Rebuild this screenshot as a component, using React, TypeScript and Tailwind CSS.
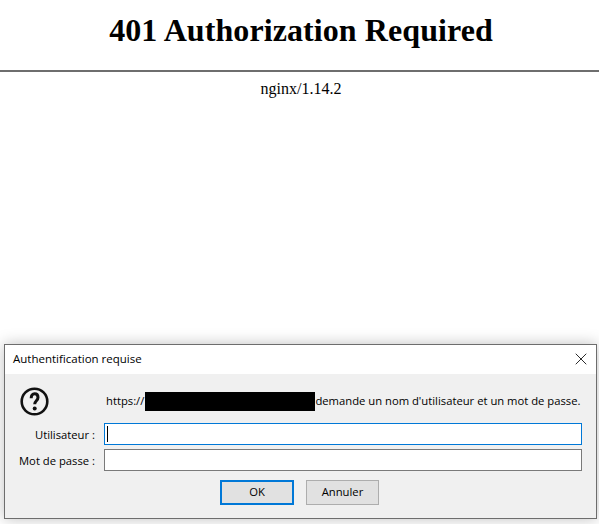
import { X } from 'lucide-react';

const Field = ({ label, focused }: { label: string; focused?: boolean }) => (
  <div className="flex h-[22px] items-center">
    <label className="w-[87px] pt-[2px] text-right">{label}</label>
    <div
      className={`ml-[9px] flex h-[22px] flex-1 items-center border bg-white pl-[2px] ${
        focused ? 'border-[#0078d7]' : 'border-[#7a7a7a]'
      }`}
    >
      {focused && <div className="h-[16px] w-px bg-black" />}
    </div>
  </div>
);

const QuestionIcon = () => (
  <svg width="29" height="29" viewBox="0 0 29 29" fill="none" className="shrink-0">
    <circle cx="14.5" cy="14.5" r="12.8" stroke="#111" strokeWidth="2.6" />
    <path
      d="M11.2 11.2c0-2.6 1.4-4.4 3.4-4.4s3.4 1.5 3.4 3.7c0 3.2-3.3 3.4-3.3 6.8"
      stroke="#111"
      strokeWidth="3"
    />
    <circle cx="14.7" cy="21.4" r="2" fill="#111" />
  </svg>
);

export default function App() {
  return (
    <div className="flex h-[524px] w-full flex-col overflow-hidden bg-white">
      <h1 className="mt-[12px] pl-[3px] text-center font-['Liberation_Serif',serif] text-[32px] leading-[36px] font-bold tracking-[0.08px] text-black">
        401 Authorization Required
      </h1>
      <hr className="mt-[22px] border-t-2 border-[#6e6e6e]" />
      <p className="mt-[8px] pl-[3px] text-center font-['Liberation_Serif',serif] text-[16px] leading-[18px] text-black">
        nginx/1.14.2
      </p>

      <div className="mt-auto mr-[2px] mb-[5px] ml-[4px] border border-[#6d6d6d] bg-[#f0f0f0] font-['Open_Sans',sans-serif] text-[11.25px] text-black shadow-[0_0_14px_rgba(0,0,0,0.25)]">
        <div className="flex h-[29px] items-center justify-between bg-white pr-[5px] pb-[2px] pl-[8px]">
          <span className="text-[11.5px]">Authentification requise</span>
          <X size={20} strokeWidth={1} />
        </div>

        <div className="pt-[12px] pr-[14px] pb-[13px] pl-[3px]">
          <div className="flex h-[30px] items-center pl-[12px]">
            <QuestionIcon />
            <span className="ml-[57px]">https://</span>
            <div className="ml-[1px] h-[19px] w-[170px] bg-black" />
            <span className="whitespace-nowrap">demande un nom d'utilisateur et un mot de passe.</span>
          </div>
          <div className="mt-[7px] flex flex-col gap-[4px]">
            <Field label="Utilisateur :" focused />
            <Field label="Mot de passe :" />
          </div>
          <div className="mt-[9px] flex justify-center gap-[12px] pl-[9px]">
            <button className="h-[25px] w-[74px] border-2 border-[#0078d7] bg-[#e1e1e1]">OK</button>
            <button className="h-[25px] w-[73px] border border-[#adadad] bg-[#e1e1e1]">Annuler</button>
          </div>
        </div>
      </div>
    </div>
  );
}
